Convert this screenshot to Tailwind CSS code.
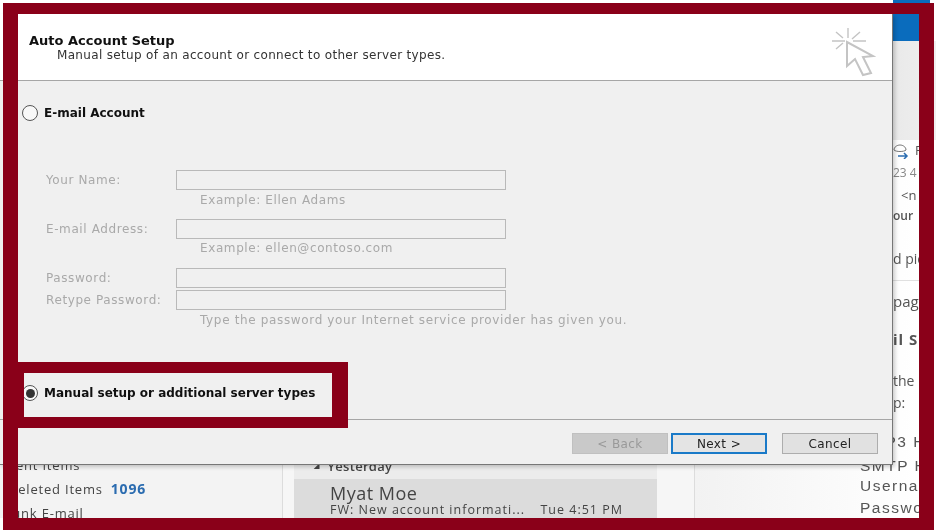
<!DOCTYPE html>
<html lang="en">
<head>
    <meta charset="UTF-8">
    <title>Auto Account Setup</title>
    <script src="https://cdn.jsdelivr.net/npm/@tailwindcss/browser@4"></script>
</head>
<body class="bg-white">
<div class="relative w-[936px] h-[531px] overflow-hidden bg-white font-['Open_Sans',sans-serif] blur-[0.4px]">

    <!-- outlook window behind the dialog -->
    <div class="flex h-[518px]">
        <div class="w-[283px] mt-[14px] overflow-hidden border-r border-[#dcdcdc] bg-[#f3f3f3] pt-[439px] pl-[8px] text-[13px] tracking-[0.8px] text-[#444]">
            <div class="h-[24px] leading-[24px]">Sent Items</div>
            <div class="h-[24px] leading-[24px] flex gap-[8px]">Deleted Items <span class="text-[14px] font-bold text-[#2b6cb0]">1096</span></div>
            <div class="h-[24px] leading-[24px]">Junk E-mail</div>
        </div>
        <div class="w-[11px] mt-[14px] bg-[#f6f6f6]"></div>
        <div class="w-[363px] flex flex-col justify-end">
            <div class="h-[20px] flex items-start gap-[8px] pl-[20px] bg-[#ececec] text-[13px] leading-[14px] font-semibold tracking-[0.3px] text-[#444]"><span class="text-[7px]">◢</span>Yesterday</div>
            <div class="h-[39px] bg-[#dcdcdc] pt-[4px] pl-[36px] text-[#444]">
                <div class="text-[18px] leading-[20px] tracking-[0.5px]">Myat Moe</div>
                <div class="flex w-[293px] justify-between text-[12.5px] leading-[14px] tracking-[1px]"><span>FW: New account informati...</span><span>Tue 4:51 PM</span></div>
            </div>
        </div>
        <div class="w-[38px] mt-[14px] border-r border-[#dcdcdc] bg-[#f6f6f6]"></div>
        <div class="flex-1 flex flex-col overflow-hidden whitespace-nowrap text-[#555]">
            <div class="h-[41px] bg-[#0a6cbd] ml-[198px] mr-[6px]"></div>
            <div class="h-[99px] bg-gradient-to-r from-[#c9c9c9] to-[#f0f0f0]"></div>
            <div class="w-[224px] overflow-hidden flex-1 bg-gradient-to-r from-[#f2f2f2] to-white">
                <div class="pl-[198px] flex items-center gap-[5px] text-[13px] h-[22px]">
                    <svg class="w-[17px] h-[16px] shrink-0" viewBox="0 0 17 16" fill="none" stroke="#777" stroke-width="1"><path d="M1 7c0-3 3-5 6-5s6 2 6 5c-2 2-10 2-12 0z"/><path stroke="#2b6cb0" stroke-width="1.5" d="M5 13h9m-3-3 3 3-3 3"/></svg>P
                </div>
                <div class="pl-[198px] text-[12px] leading-[22px] h-[22px] text-[#888]">23 4</div>
                <div class="pl-[206px] text-[13px] leading-[22px] h-[22px]">&lt;n</div>
                <div class="pl-[198px] text-[12px] leading-[20px] h-[21px] font-semibold">our</div>
                <div class="h-[21px]"></div>
                <div class="pl-[198px] text-[14px] leading-[21px] h-[21px]">d pic</div>
                <div class="h-[12px] border-b border-[#e0e0e0]"></div>
                <div class="pl-[198px] text-[15px] leading-[21px] h-[21px] mt-[10px]">pag</div>
                <div class="pl-[198px] text-[15px] tracking-[1px] leading-[21px] h-[21px] mt-[17px] font-bold">il S</div>
                <div class="pl-[198px] text-[14px] leading-[21px] h-[21px] mt-[20px]">the</div>
                <div class="pl-[198px] text-[14px] leading-[21px] h-[21px] mt-[1px]">p:</div>
                <div class="pl-[165px] text-[15.5px] tracking-[1.5px] leading-[22px] h-[22px] mt-[18px] font-['Liberation_Sans',sans-serif]">POP3 H</div>
                <div class="pl-[165px] text-[15.5px] tracking-[1.5px] leading-[22px] h-[20px] mt-[2px] overflow-hidden font-['Liberation_Sans',sans-serif]">SMTP H</div>
                <div class="pl-[165px] text-[15.5px] tracking-[1.5px] leading-[22px] h-[22px] font-['Liberation_Sans',sans-serif]">Username</div>
                <div class="pl-[165px] text-[15.5px] tracking-[1.5px] leading-[22px] h-[22px] font-['Liberation_Sans',sans-serif]">Password</div>
            </div>
        </div>
    </div>

    <!-- dialog -->
    <div class="absolute left-0 top-[14px] w-[893px] h-[451px] flex flex-col bg-[#f0f0f0] border-r border-b border-[#777] shadow-[2px_2px_4px_rgba(0,0,0,0.2)] font-['DejaVu_Sans',sans-serif] text-[12px]">
        <div class="h-[67px] shrink-0 flex justify-between bg-white border-b border-[#a6a6a6] pl-[29px]">
            <div class="pt-[19px]">
                <div class="text-[13px] font-bold text-[#111] leading-[15px]">Auto Account Setup</div>
                <div class="pl-[28px] text-[#333] leading-[15px] tracking-[0.33px]">Manual setup of an account or connect to other server types.</div>
            </div>
            <svg class="w-[55px] h-[56px] mt-[10px] mr-[12px]" viewBox="0 0 55 56" fill="none" stroke="#c4c4c4" stroke-width="1.4">
                <path d="M23 4v10M35 8l-8 7M28 17h13M7 17h13M11 8l7 6M11 25l7-6"/>
                <path fill="#fff" stroke-width="2" d="M22 18v24l8-7 8 16 8-2-8-16 10-1z"/>
            </svg>
        </div>

        <div class="h-[339px] shrink-0 border-b border-[#a6a6a6] pl-[22px]">
            <div class="flex items-center gap-[6px] mt-[24px] h-[16px] font-bold leading-[16px] text-[#111]">
                <span class="w-[16px] h-[16px] rounded-full border border-[#555] bg-[#f8f8f8]"></span>E-mail Account
            </div>
            <div class="mt-[49px] pl-[24px] text-[#a9a9a9] tracking-[0.6px]">
                <div class="flex items-center h-[20px]"><span class="w-[130px]">Your Name:</span><span class="w-[330px] h-[20px] border border-[#b9b9b9]"></span></div>
                <div class="pl-[154px] h-[29px] pt-[3px] leading-[15px]">Example: Ellen Adams</div>
                <div class="flex items-center h-[20px]"><span class="w-[130px]">E-mail Address:</span><span class="w-[330px] h-[20px] border border-[#b9b9b9]"></span></div>
                <div class="pl-[154px] h-[29px] pt-[2px] leading-[15px]">Example: ellen@contoso.com</div>
                <div class="flex items-center h-[20px]"><span class="w-[130px]">Password:</span><span class="w-[330px] h-[20px] border border-[#b9b9b9]"></span></div>
                <div class="flex items-center h-[20px] mt-[2px]"><span class="w-[130px]">Retype Password:</span><span class="w-[330px] h-[20px] border border-[#b9b9b9]"></span></div>
                <div class="pl-[154px] pt-[3px] leading-[15px] tracking-[0.65px]">Type the password your Internet service provider has given you.</div>
            </div>
            <div class="flex items-center gap-[6px] mt-[57px] h-[16px] font-bold leading-[16px] text-[#111]">
                <span class="w-[16px] h-[16px] flex items-center justify-center rounded-full border border-[#555] bg-[#f8f8f8]"><span class="w-[9px] h-[9px] rounded-full bg-[#333]"></span></span>Manual setup or additional server types
            </div>
        </div>

        <div class="flex justify-end gap-[15px] pt-[13px] pr-[14px]">
            <div class="flex gap-[3px]">
                <button class="w-[96px] h-[21px] bg-[#c9c9c9] border border-[#c0c0c0] text-[#999] tracking-[0.4px]">&lt; Back</button>
                <button class="w-[96px] h-[21px] bg-[#e4e4e4] border-2 border-[#1a7ac8] text-[#222] tracking-[0.4px]">Next &gt;</button>
            </div>
            <button class="w-[96px] h-[21px] bg-[#e1e1e1] border border-[#adadad] text-[#222] tracking-[0.4px]">Cancel</button>
        </div>
    </div>

    <!-- annotation frames -->
    <div class="absolute left-[3px] top-[3px] w-[931px] h-[527px] border-l-[15px] border-r-[15px] border-t-[11px] border-b-[12px] border-[#8a0019]"></div>
    <div class="absolute left-[18px] top-[362px] w-[330px] h-[66px] border-l-[6px] border-r-[16px] border-y-[11px] border-[#8a0019]"></div>
</div>
</body>
</html>
